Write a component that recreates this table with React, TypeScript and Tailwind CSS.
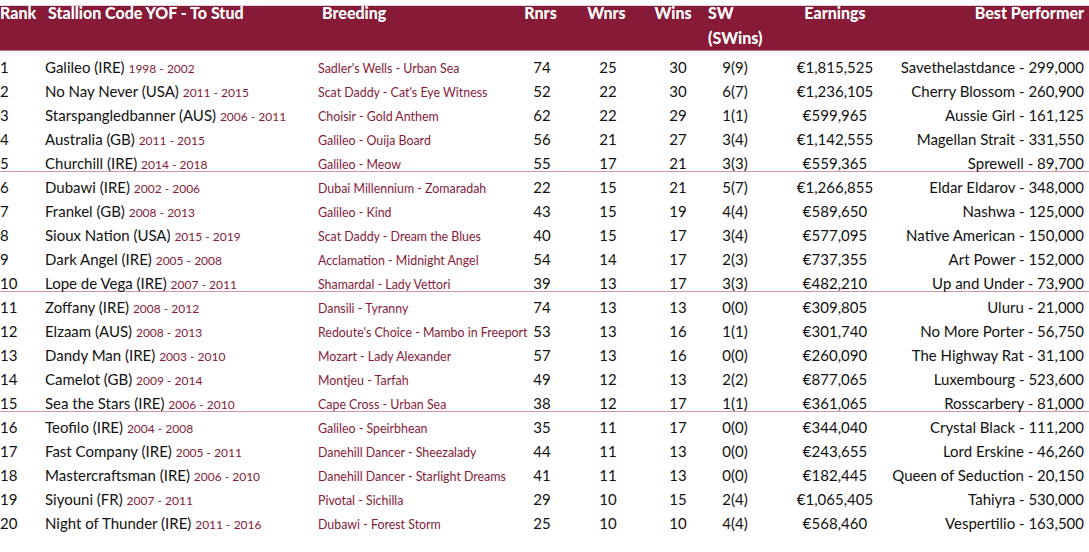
import React from "react";

type Row = {
  rank: number;
  name: string;
  years: string;
  breeding: string;
  rnrs: number;
  wnrs: number;
  wins: number;
  sw: string;
  earnings: string;
  best: string;
};

const rows: Row[] = [
  { rank: 1, name: "Galileo (IRE)", years: "1998 - 2002", breeding: "Sadler's Wells - Urban Sea", rnrs: 74, wnrs: 25, wins: 30, sw: "9(9)", earnings: "€1,815,525", best: "Savethelastdance - 299,000" },
  { rank: 2, name: "No Nay Never (USA)", years: "2011 - 2015", breeding: "Scat Daddy - Cat's Eye Witness", rnrs: 52, wnrs: 22, wins: 30, sw: "6(7)", earnings: "€1,236,105", best: "Cherry Blossom - 260,900" },
  { rank: 3, name: "Starspangledbanner (AUS)", years: "2006 - 2011", breeding: "Choisir - Gold Anthem", rnrs: 62, wnrs: 22, wins: 29, sw: "1(1)", earnings: "€599,965", best: "Aussie Girl - 161,125" },
  { rank: 4, name: "Australia (GB)", years: "2011 - 2015", breeding: "Galileo - Ouija Board", rnrs: 56, wnrs: 21, wins: 27, sw: "3(4)", earnings: "€1,142,555", best: "Magellan Strait - 331,550" },
  { rank: 5, name: "Churchill (IRE)", years: "2014 - 2018", breeding: "Galileo - Meow", rnrs: 55, wnrs: 17, wins: 21, sw: "3(3)", earnings: "€559,365", best: "Sprewell - 89,700" },
  { rank: 6, name: "Dubawi (IRE)", years: "2002 - 2006", breeding: "Dubai Millennium - Zomaradah", rnrs: 22, wnrs: 15, wins: 21, sw: "5(7)", earnings: "€1,266,855", best: "Eldar Eldarov - 348,000" },
  { rank: 7, name: "Frankel (GB)", years: "2008 - 2013", breeding: "Galileo - Kind", rnrs: 43, wnrs: 15, wins: 19, sw: "4(4)", earnings: "€589,650", best: "Nashwa - 125,000" },
  { rank: 8, name: "Sioux Nation (USA)", years: "2015 - 2019", breeding: "Scat Daddy - Dream the Blues", rnrs: 40, wnrs: 15, wins: 17, sw: "3(4)", earnings: "€577,095", best: "Native American - 150,000" },
  { rank: 9, name: "Dark Angel (IRE)", years: "2005 - 2008", breeding: "Acclamation - Midnight Angel", rnrs: 54, wnrs: 14, wins: 17, sw: "2(3)", earnings: "€737,355", best: "Art Power - 152,000" },
  { rank: 10, name: "Lope de Vega (IRE)", years: "2007 - 2011", breeding: "Shamardal - Lady Vettori", rnrs: 39, wnrs: 13, wins: 17, sw: "3(3)", earnings: "€482,210", best: "Up and Under - 73,900" },
  { rank: 11, name: "Zoffany (IRE)", years: "2008 - 2012", breeding: "Dansili - Tyranny", rnrs: 74, wnrs: 13, wins: 13, sw: "0(0)", earnings: "€309,805", best: "Uluru - 21,000" },
  { rank: 12, name: "Elzaam (AUS)", years: "2008 - 2013", breeding: "Redoute's Choice - Mambo in Freeport", rnrs: 53, wnrs: 13, wins: 16, sw: "1(1)", earnings: "€301,740", best: "No More Porter - 56,750" },
  { rank: 13, name: "Dandy Man (IRE)", years: "2003 - 2010", breeding: "Mozart - Lady Alexander", rnrs: 57, wnrs: 13, wins: 16, sw: "0(0)", earnings: "€260,090", best: "The Highway Rat - 31,100" },
  { rank: 14, name: "Camelot (GB)", years: "2009 - 2014", breeding: "Montjeu - Tarfah", rnrs: 49, wnrs: 12, wins: 13, sw: "2(2)", earnings: "€877,065", best: "Luxembourg - 523,600" },
  { rank: 15, name: "Sea the Stars (IRE)", years: "2006 - 2010", breeding: "Cape Cross - Urban Sea", rnrs: 38, wnrs: 12, wins: 17, sw: "1(1)", earnings: "€361,065", best: "Rosscarbery - 81,000" },
  { rank: 16, name: "Teofilo (IRE)", years: "2004 - 2008", breeding: "Galileo - Speirbhean", rnrs: 35, wnrs: 11, wins: 17, sw: "0(0)", earnings: "€344,040", best: "Crystal Black - 111,200" },
  { rank: 17, name: "Fast Company (IRE)", years: "2005 - 2011", breeding: "Danehill Dancer - Sheezalady", rnrs: 44, wnrs: 11, wins: 13, sw: "0(0)", earnings: "€243,655", best: "Lord Erskine - 46,260" },
  { rank: 18, name: "Mastercraftsman (IRE)", years: "2006 - 2010", breeding: "Danehill Dancer - Starlight Dreams", rnrs: 41, wnrs: 11, wins: 13, sw: "0(0)", earnings: "€182,445", best: "Queen of Seduction - 20,150" },
  { rank: 19, name: "Siyouni (FR)", years: "2007 - 2011", breeding: "Pivotal - Sichilla", rnrs: 29, wnrs: 10, wins: 15, sw: "2(4)", earnings: "€1,065,405", best: "Tahiyra - 530,000" },
  { rank: 20, name: "Night of Thunder (IRE)", years: "2011 - 2016", breeding: "Dubawi - Forest Storm", rnrs: 25, wnrs: 10, wins: 10, sw: "4(4)", earnings: "€568,460", best: "Vespertilio - 163,500" },
];

const cols = "grid grid-cols-[45px_273px_202px_44px_88px_52px_62px_138px_minmax(0,1fr)]";

export default function App() {
  return (
    <div className="w-[1089px] h-[552px] bg-white font-['Lato',sans-serif] overflow-hidden">
      <div className="h-[6px] border-b border-[#e3d6da]" />

      {/* Header */}
      <div className={`${cols} h-[45px] bg-[#861a37] border-b border-[#b8707f] pr-[5px] text-white text-[16px] font-black leading-[13px] whitespace-nowrap`}>
        <div>Rank</div>
        <div className="pl-[3px]">Stallion Code YOF - To Stud</div>
        <div className="pl-[4px]">Breeding</div>
        <div className="text-center pr-[3px]">Rnrs</div>
        <div className="text-center pr-[3px]">Wnrs</div>
        <div className="text-center pr-[10px]">Wins</div>
        <div className="pl-[4px]">
          <div>SW</div>
          <div className="mt-[12px]">(SWins)</div>
        </div>
        <div className="flex justify-center">Earnings</div>
        <div className="flex justify-end">Best Performer</div>
      </div>

      {/* Rows */}
      <div className="mt-px">
        {rows.map((r) => (
          <div
            key={r.rank}
            className={`${cols} h-6 pt-[6px] pr-[5px] text-[15px] leading-[18px] text-[#111] whitespace-nowrap ${
              r.rank % 5 === 0 && r.rank < 20 ? "border-b border-[#d394a4]" : ""
            }`}
          >
            <div>{r.rank}</div>
            <div>
              {r.name}{" "}
              <span className="text-[12px] text-[#861a37]">{r.years}</span>
            </div>
            <div className="text-[12.4px] text-[#861a37] pt-[2px]">{r.breeding}</div>
            <div className="text-center">{r.rnrs}</div>
            <div className="text-center">{r.wnrs}</div>
            <div className="text-center">{r.wins}</div>
            <div className="text-center">{r.sw}</div>
            <div className="flex justify-center">{r.earnings}</div>
            <div className="flex justify-end">{r.best}</div>
          </div>
        ))}
      </div>
    </div>
  );
}
